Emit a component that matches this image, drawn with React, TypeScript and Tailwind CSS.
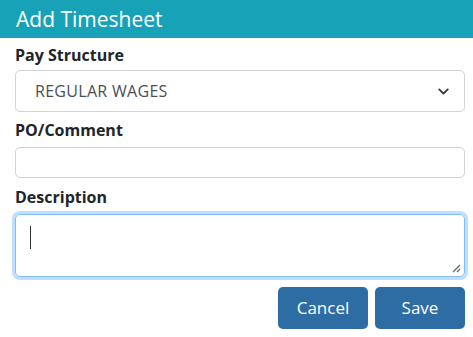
import { ChevronDown } from "lucide-react";

export default function App() {
  return (
    <div className="w-[473px] h-[337px] bg-white font-['Open_Sans',sans-serif] text-[#212529] overflow-hidden">
      <div className="h-[38px] bg-[#18a2b8] flex items-center px-4">
        <h3 className="text-[21px] text-white leading-none">Add Timesheet</h3>
      </div>

      <div className="pl-[15px] pr-[8px] pt-[5px]">
        <label className="block text-[16px] font-bold leading-[24px] mb-[3px]">Pay Structure</label>
        <div className="h-[42px] border border-[#ced4da] rounded-[5px] flex items-center justify-between pl-[19px] pr-[12px]">
          <span className="text-[16px] text-[#495057] tracking-[0.3px]">REGULAR WAGES</span>
          <ChevronDown size={17} strokeWidth={2.6} className="text-[#343a40]" />
        </div>

        <label className="block text-[16px] font-bold leading-[24px] mt-[6px] mb-[5px]">PO/Comment</label>
        <div className="h-[31px] border border-[#ced4da] rounded-[5px]" />

        <label className="block text-[16px] font-bold leading-[24px] mt-[7px] mb-[5px]">Description</label>
        <div className="relative h-[63px] border border-[#80bdff] rounded-[5px] ring-[3px] ring-[#c2defe]">
          <span className="absolute left-[14px] top-[11px] w-px h-[23px] bg-[#333]" />
          <svg
            className="absolute right-[3px] bottom-[3px]"
            width="10"
            height="10"
            viewBox="0 0 10 10"
          >
            <path d="M9 2 L2 9 M9 6 L6 9" stroke="#666" strokeWidth="1.3" />
          </svg>
        </div>

        <div className="flex justify-end gap-[7px] mt-[10px]">
          <button className="w-[90px] h-[42px] rounded-[5px] bg-[#2e6da4] text-white text-[17px]">Cancel</button>
          <button className="w-[90px] h-[42px] rounded-[5px] bg-[#2e6da4] text-white text-[17px]">Save</button>
        </div>
      </div>
    </div>
  );
}
